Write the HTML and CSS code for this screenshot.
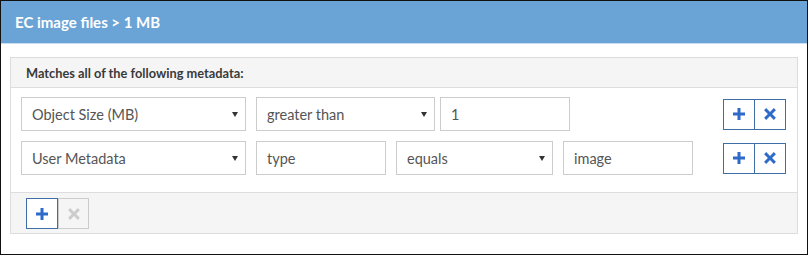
FILE: index.html
```html
<!DOCTYPE html>
<html lang="en">
<head>
    <meta charset="UTF-8">
    <meta name="viewport" content="width=device-width, initial-scale=1.0">
    <title>EC image files &gt; 1 MB</title>
    <link rel="stylesheet" href="styles.css">
</head>
<body>
    <div class="frame">
        <div class="title-bar">EC image files &gt; 1 MB</div>
        <div class="content">
            <div class="panel">
                <div class="panel-heading">Matches all of the following metadata:</div>
                <div class="panel-body">
                    <div class="rule-row">
                        <div class="select-wrap w-key">
                            <select class="field">
                                <option>Object Size (MB)</option>
                            </select>
                        </div>
                        <div class="select-wrap w-op">
                            <select class="field">
                                <option>greater than</option>
                            </select>
                        </div>
                        <input type="text" class="field w-val tight" value="1">
                        <div class="row-actions">
                            <button type="button" class="icon-btn">
                                <svg viewBox="0 0 12 12" width="12" height="12"><path d="M4.5 0h3v4.5h4.5v3h-4.5v4.5h-3v-4.5h-4.5v-3h4.5z"/></svg>
                            </button>
                            <button type="button" class="icon-btn">
                                <svg viewBox="0 0 12 12" width="12" height="12"><path d="M2.2 0.1l3.8 3.8 3.8-3.8 2.1 2.1-3.8 3.8 3.8 3.8-2.1 2.1-3.8-3.8-3.8 3.8-2.1-2.1 3.8-3.8-3.8-3.8z"/></svg>
                            </button>
                        </div>
                    </div>
                    <div class="rule-row">
                        <div class="select-wrap w-key">
                            <select class="field">
                                <option>User Metadata</option>
                            </select>
                        </div>
                        <input type="text" class="field w-val" value="type">
                        <div class="select-wrap w-eq">
                            <select class="field">
                                <option>equals</option>
                            </select>
                        </div>
                        <input type="text" class="field w-val" value="image">
                        <div class="row-actions">
                            <button type="button" class="icon-btn">
                                <svg viewBox="0 0 12 12" width="12" height="12"><path d="M4.5 0h3v4.5h4.5v3h-4.5v4.5h-3v-4.5h-4.5v-3h4.5z"/></svg>
                            </button>
                            <button type="button" class="icon-btn">
                                <svg viewBox="0 0 12 12" width="12" height="12"><path d="M2.2 0.1l3.8 3.8 3.8-3.8 2.1 2.1-3.8 3.8 3.8 3.8-2.1 2.1-3.8-3.8-3.8 3.8-2.1-2.1 3.8-3.8-3.8-3.8z"/></svg>
                            </button>
                        </div>
                    </div>
                </div>
                <div class="panel-footer">
                    <button type="button" class="icon-btn">
                        <svg viewBox="0 0 12 12" width="12" height="12"><path d="M4.5 0h3v4.5h4.5v3h-4.5v4.5h-3v-4.5h-4.5v-3h4.5z"/></svg>
                    </button>
                    <button type="button" class="icon-btn disabled" disabled>
                        <svg viewBox="0 0 12 12" width="12" height="12"><path d="M2.2 0.1l3.8 3.8 3.8-3.8 2.1 2.1-3.8 3.8 3.8 3.8-2.1 2.1-3.8-3.8-3.8 3.8-2.1-2.1 3.8-3.8-3.8-3.8z"/></svg>
                    </button>
                </div>
            </div>
        </div>
    </div>
</body>
</html>
```

FILE: styles.css
```css
body {
    margin: 0;
    font-family: Lato, "Open Sans", sans-serif;
    color: #333;
    background: #fff;
}

.frame {
    width: 808px;
    height: 255px;
    box-sizing: border-box;
    border: 1px solid #111;
    background: #fff;
}

.title-bar {
    height: 42px;
    line-height: 42px;
    padding-left: 14px;
    background-color: #6aa4d6;
    border-bottom: 1px solid #c9ddf0;
    color: #fff;
    font-weight: bold;
    font-size: 15px;
}

.content {
    padding: 13px 9px 0 9px;
}

.panel {
    border: 1px solid #ddd;
}

.panel-heading {
    height: 29px;
    line-height: 30px;
    padding: 0 15px;
    background: #f5f5f5;
    border-bottom: 1px solid #ddd;
    font-size: 12.8px;
    font-weight: bold;
    color: #3a3a3a;
}

.panel-body {
    padding: 9px 11px 17px 10px;
    display: flex;
    flex-direction: column;
    gap: 10px;
}

.rule-row {
    display: flex;
    align-items: center;
    gap: 10px;
}

.field {
    height: 34px;
    box-sizing: border-box;
    border: 1px solid #ccc;
    border-radius: 0;
    background: #fff;
    padding: 0 10px;
    font-family: Lato, "Open Sans", sans-serif;
    font-size: 14.5px;
    color: #555;
    outline: none;
}

select.field {
    appearance: none;
    -webkit-appearance: none;
    width: 100%;
}

.select-wrap {
    position: relative;
}

.select-wrap::after {
    content: "";
    position: absolute;
    right: 8px;
    top: 15px;
    border-left: 3px solid transparent;
    border-right: 3px solid transparent;
    border-top: 5px solid #333;
}

.w-key {
    width: 225px;
}

.w-op {
    width: 179px;
}

.w-eq {
    width: 157px;
}

.w-val {
    width: 130px;
}

.tight {
    margin-left: -5px;
}

.row-actions {
    margin-left: auto;
    display: flex;
}

.icon-btn {
    width: 32px;
    height: 31px;
    box-sizing: border-box;
    padding: 0;
    margin: 0;
    border: 1px solid #3f6ea6;
    background: #fff;
    display: flex;
    align-items: center;
    justify-content: center;
    cursor: pointer;
}

.icon-btn + .icon-btn {
    border-left: none;
    width: 31px;
}

.icon-btn svg {
    fill: #2e6bc8;
}

.icon-btn.disabled {
    border-color: #ccc;
    background: #f5f5f5;
    cursor: default;
}

.icon-btn.disabled svg {
    fill: #ccc;
}

.panel-footer {
    display: flex;
    padding: 5px 15px 4px 15px;
    background: #f5f5f5;
    border-top: 1px solid #ddd;
}

.panel-footer .icon-btn.disabled {
    border-left: 1px solid #ccc;
}
```
